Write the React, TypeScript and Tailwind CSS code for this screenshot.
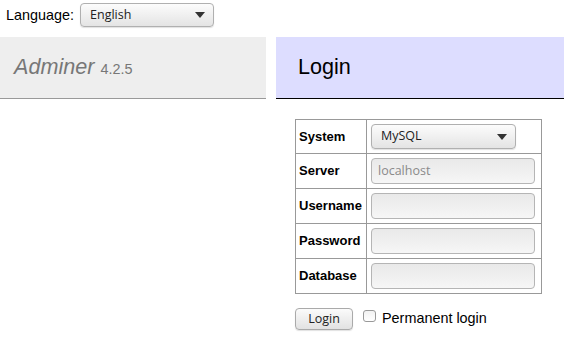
import React from "react";

function Arrow() {
  return (
    <svg width="10" height="6" viewBox="0 0 10 6" className="shrink-0">
      <path d="M0 0 L10 0 L5 6 Z" fill="#333" />
    </svg>
  );
}

function Select({ value, className }: { value: string; className: string }) {
  return (
    <div
      className={
        "flex items-center justify-between rounded-[4px] border border-[#b0b0b0] bg-gradient-to-b from-[#fcfcfc] to-[#e4e4e4] pl-[9px] pr-[8px] text-[12.5px] text-[#222] shadow-[0_1px_1px_rgba(0,0,0,0.12)] " +
        className
      }
      style={{ fontFamily: '"Open Sans", "Noto Sans", sans-serif' }}
    >
      <span>{value}</span>
      <Arrow />
    </div>
  );
}

function Input({ placeholder }: { placeholder?: string }) {
  return (
    <div
      className="flex h-[26px] w-[164px] items-center rounded-[4px] border border-[#b5b5b5] bg-gradient-to-b from-[#e9e9e9] to-[#f6f6f6] pl-[6px] text-[12.5px] text-[#8a8a8a]"
      style={{ fontFamily: '"Open Sans", "Noto Sans", sans-serif' }}
    >
      {placeholder}
    </div>
  );
}

const rows: { label: string; field: React.ReactNode; h: string }[] = [
  { label: "System", field: <Select value="MySQL" className="h-[25px] w-[145px]" />, h: "h-[34px]" },
  { label: "Server", field: <Input placeholder="localhost" />, h: "h-[35px]" },
  { label: "Username", field: <Input />, h: "h-[35px]" },
  { label: "Password", field: <Input />, h: "h-[35px]" },
  { label: "Database", field: <Input />, h: "h-[35px]" },
];

export default function App() {
  return (
    <div
      className="min-h-[356px] w-[564px] bg-white text-black"
      style={{ fontFamily: '"Liberation Sans", Arial, sans-serif' }}
    >
      <div className="flex h-[37px] items-start pt-[3px] pl-[6px]">
        <span className="mt-[3px] text-[14.4px] leading-[18px]">Language:</span>
        <Select value="English" className="ml-[6px] h-[24px] w-[134px]" />
      </div>
      <div className="flex">
        <div className="flex h-[62px] w-[266px] items-center border-b border-[#999] bg-[#eeeeee] pl-[14px] text-[#777]">
          <span className="text-[21.6px] italic">Adminer</span>
          <span className="ml-[6px] mt-[4px] text-[14.4px]">4.2.5</span>
        </div>
        <div className="ml-[10px] flex-1">
          <div className="flex h-[62px] items-center border-b border-black bg-[#ddddff] pl-[22px] text-[21.6px]">
            Login
          </div>
          <div className="ml-[19px] mt-[20px]">
            <table className="border-collapse border border-[#999]">
              <tbody>
                {rows.map((r) => (
                  <tr key={r.label} className={r.h}>
                    <th className="w-[71px] border border-[#999] pl-[3px] text-left align-middle text-[13px] font-bold">
                      {r.label}
                    </th>
                    <td className="w-[175px] border border-[#999] pl-[4px] align-middle">
                      {r.field}
                    </td>
                  </tr>
                ))}
              </tbody>
            </table>
            <div className="mt-[14px] flex items-center">
              <div
                className="flex h-[22px] w-[58px] items-center justify-center rounded-[4px] border border-[#aaa] bg-gradient-to-b from-[#fbfbfb] to-[#e2e2e2] text-[12.5px] text-[#222] shadow-[0_1px_1px_rgba(0,0,0,0.12)]"
                style={{ fontFamily: '"Open Sans", "Noto Sans", sans-serif' }}
              >
                Login
              </div>
              <div className="ml-[10px] mb-[6px] h-[12px] w-[13px] rounded-[3px] border border-[#999] bg-gradient-to-b from-[#f2f2f2] to-[#fff]" />
              <span className="ml-[6px] text-[14.4px]">Permanent login</span>
            </div>
          </div>
        </div>
      </div>
    </div>
  );
}
